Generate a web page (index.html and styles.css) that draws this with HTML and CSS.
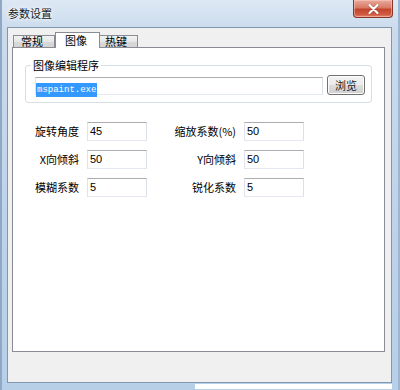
FILE: index.html
```html
<!DOCTYPE html>
<html lang="zh-CN">
<head>
    <meta charset="UTF-8">
    <title>参数设置</title>
    <link rel="stylesheet" href="styles.css">
</head>
<body>
    <div class="window">
        <!-- Title bar -->
        <div class="titlebar">
            <span class="title">参数设置</span>
            <button class="close-btn">
                <svg width="11" height="10" viewBox="0 0 11 10">
                    <path d="M1.5 1 L9.5 9 M9.5 1 L1.5 9" stroke="#5a1a10" stroke-width="3.2" stroke-linecap="round" opacity="0.35"/>
                    <path d="M1.5 1 L9.5 9 M9.5 1 L1.5 9" stroke="#ffffff" stroke-width="2.2" stroke-linecap="round"/>
                </svg>
            </button>
        </div>

        <!-- Client area -->
        <div class="middle">
            <div class="client">
                <div class="tabs">
                    <div class="tab tab-general">常规</div>
                    <div class="tab tab-image active">图像</div>
                    <div class="tab tab-hotkey">热键</div>
                </div>
                <div class="panel">
                    <fieldset class="group">
                        <legend>图像编辑程序</legend>
                        <div class="editor-row">
                            <div class="textbox editor-path"><span class="selected">mspaint.exe</span></div>
                            <button class="browse-btn">浏览</button>
                        </div>
                    </fieldset>

                    <div class="fields">
                        <label class="field-label">旋转角度</label>
                        <div class="textbox field-input">45</div>
                        <label class="field-label">缩放系数(%)</label>
                        <div class="textbox field-input">50</div>

                        <label class="field-label">X向倾斜</label>
                        <div class="textbox field-input">50</div>
                        <label class="field-label">Y向倾斜</label>
                        <div class="textbox field-input">50</div>

                        <label class="field-label">模糊系数</label>
                        <div class="textbox field-input">5</div>
                        <label class="field-label">锐化系数</label>
                        <div class="textbox field-input">5</div>
                    </div>
                </div>
            </div>
        </div>
        <div class="frame-bottom"></div>
    </div>
</body>
</html>
```

FILE: styles.css
```css
/* Basic reset */
* {
    margin: 0;
    padding: 0;
    box-sizing: border-box;
}

body {
    width: 400px;
    height: 390px;
    background-color: #ffffff;
    font-family: "Noto Sans CJK SC", "Liberation Sans", sans-serif;
    font-size: 11px;
    color: #000;
    overflow: hidden;
}

/* Window frame (Aero style) */
.window {
    width: 400px;
    height: 390px;
    display: flex;
    flex-direction: column;
    background: linear-gradient(to bottom, #dde8f3, #cadbed 30px, #bfd3ea 200px, #b8cfe8);
    border-left: 2px solid #8fa8c6;
    border-right: 2px solid #9fb6d2;
}

.titlebar {
    height: 27px;
    display: flex;
    align-items: flex-start;
}

.title {
    padding-left: 6px;
    line-height: 26px;
    color: #1b1b1b;
    text-shadow: 0 0 6px #ffffff, 0 0 3px #ffffff;
}

.close-btn {
    margin-left: auto;
    margin-right: 5px;
    width: 40px;
    height: 18px;
    border: 1px solid #8a3527;
    border-top: none;
    border-radius: 0 0 4px 4px;
    background: linear-gradient(to bottom, #e9aa9c, #d87a66 45%, #c3452e 55%, #cf5b42 85%, #e38870);
    display: flex;
    align-items: center;
    justify-content: center;
    box-shadow: inset 0 0 0 1px rgba(255, 220, 210, 0.45);
}

.middle {
    padding: 0 6px 0 5px;
}

/* Client area */
.client {
    height: 356px;
    background-color: #f0f0f0;
    border: 1px solid #8196b1;
}

/* Tabs */
.tabs {
    display: flex;
    align-items: flex-end;
    height: 15px;
    margin: 4px 0 0 5px;
}

.tab {
    height: 12px;
    line-height: 11px;
    padding-left: 5px;
    border: 1px solid #898c95;
    border-bottom: none;
    background: linear-gradient(to bottom, #f3f3f3, #e6e6e6 50%, #d9d9d9 51%, #d4d4d4);
}

.tab-general {
    width: 42px;
    padding-left: 7px;
}

.tab-image {
    width: 45px;
    padding-left: 9px;
}

.tab-hotkey {
    width: 38px;
    padding-left: 5px;
    border-left: none;
}

.tab.active {
    height: 16px;
    line-height: 14px;
    margin-bottom: -1px;
    background: #ffffff;
    position: relative;
    z-index: 1;
}

.panel {
    height: 305px;
    margin: 0 6px 0 4px;
    background-color: #ffffff;
    border: 1px solid #898c95;
    padding-top: 10px;
}

/* Group box */
.group {
    margin: 0 12px 0 12px;
    border: 1px solid #d5dfe5;
    border-radius: 3px;
    padding: 3px 6px 7px 9px;
    box-shadow: inset 1px 1px 0 #ffffff;
}

.group legend {
    margin-left: -4px;
    padding: 0 2px;
    line-height: 14px;
}

.editor-row {
    display: flex;
    align-items: flex-end;
}

.textbox {
    background-color: #ffffff;
    border: 1px solid;
    border-color: #abadb3 #dbdfe6 #e3e9ef #e2e3ea;
}

.editor-path {
    width: 288px;
    height: 18px;
    padding: 1px 0 0 0;
}

.selected {
    display: inline-block;
    height: 14px;
    padding: 0 1px;
    background-color: #3399ff;
    color: #ffffff;
    font-family: "Liberation Mono", monospace;
    font-size: 9px;
    line-height: 14px;
}

.browse-btn {
    margin-left: 4px;
    width: 38px;
    height: 20px;
    border: 1px solid #707070;
    border-radius: 3px;
    background: linear-gradient(to bottom, #f2f2f2, #ebebeb 50%, #dddddd 51%, #cfcfcf);
    font-family: "Noto Sans CJK SC", sans-serif;
    font-size: 11px;
    line-height: 16px;
    color: #1b1b1b;
    box-shadow: inset 0 0 0 1px #fcfcfc;
}

/* Parameter grid */
.fields {
    display: grid;
    grid-template-columns: 67px 60px 97px 60px;
    grid-auto-rows: 19px;
    row-gap: 9px;
    margin: 19px 0 0 7px;
}

.field-label {
    text-align: right;
    padding-right: 8px;
    line-height: 19px;
}

.field-input {
    height: 19px;
    padding-left: 2px;
    font-family: "Liberation Sans", sans-serif;
    font-size: 11px;
    line-height: 16px;
}

/* Cut-off strip at the bottom of the screenshot */
.frame-bottom {
    height: 5px;
    margin: 1px 6px 0 193px;
    background-color: #ffffff;
}
```
